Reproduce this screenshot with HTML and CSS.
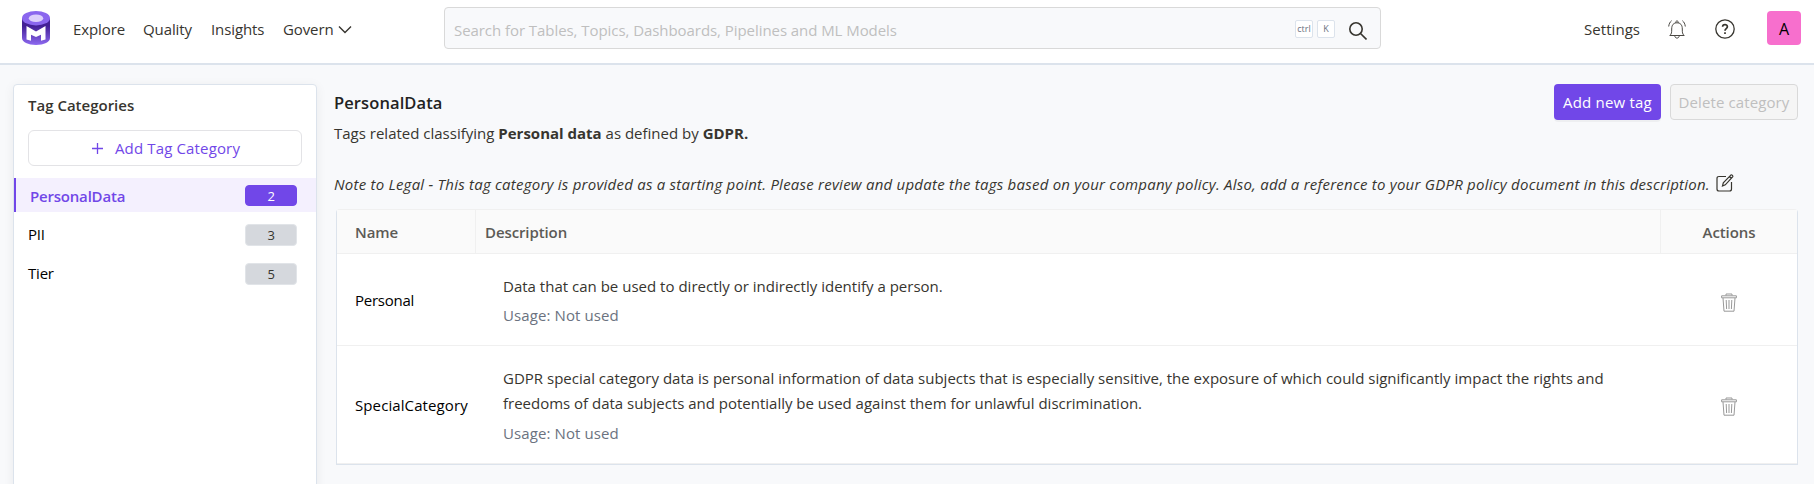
FILE: index.html
```html
<!DOCTYPE html>
<html lang="en">
<head>
<meta charset="utf-8">
<title>Tags</title>
<link rel="stylesheet" href="styles.css">
</head>
<body>
<header class="navbar">
  <svg class="logo" viewBox="0 0 28 34">
    <defs>
      <linearGradient id="body" x1="0" y1="0" x2="0" y2="1">
        <stop offset="0.3" stop-color="#432096"/><stop offset="1" stop-color="#8d69f0"/>
      </linearGradient>
    </defs>
    <path fill="url(#body)" d="M0 7h28v20c0 4-6 7-14 7S0 31 0 27z"/>
    <ellipse cx="14" cy="7.2" rx="14" ry="7.2" fill="#8a66ee"/>
    <ellipse cx="14" cy="7.2" rx="7.2" ry="3.8" fill="#dccffb"/>
    <path fill="#fff" d="M4.500 15 14 20.500l9.500-5.500v13.500l-4.500 1.200v-6L14 26l-5-2.300v6l-4.500-1.200z"/>
  </svg>
  <nav class="links">
    <a class="explore">Explore</a><a class="quality">Quality</a><a class="insights">Insights</a><a class="govern">Govern</a>
    <svg class="chevron" viewBox="0 0 14 9"><path d="M1 1.500l6 6 6-6"/></svg>
  </nav>
  <div class="search">
    <span class="placeholder">Search for Tables, Topics, Dashboards, Pipelines and ML Models</span>
    <kbd>ctrl</kbd><kbd>K</kbd>
    <svg class="glass" viewBox="0 0 18 18"><circle cx="7" cy="7" r="6.200"/><path d="M11.500 11.500l6 6"/></svg>
  </div>
  <div class="tools">
    <a class="settings">Settings</a>
    <svg class="bell" viewBox="0 0 18 20"><path d="M1.800 16.500h14.400c-1.900-1.700-1.900-3-1.900-6.500 0-4.200-2-6.200-5.300-6.200S3.700 5.800 3.700 10c0 3.500 0 4.800-1.900 6.500zM7.700 3.800c0-2.600 2.600-2.600 2.600 0M6.800 16.700c0 3.200 4.400 3.200 4.400 0M3.600 1.700C2 3 1 4.800.7 7.500M14.400 1.700c1.600 1.300 2.600 3.100 2.900 5.800"/></svg>
    <svg class="help" viewBox="0 0 20 20"><circle cx="10" cy="10" r="9.200"/><path class="mark" d="M7.600 7.800c0-3 4.800-3 4.800 0 0 1.900-2.400 1.900-2.400 4M10 13.300v1.700"/></svg>
    <span class="avatar">A</span>
  </div>
</header>
<div class="page">
  <aside class="sidebar">
    <h2 class="side-title">Tag Categories</h2>
    <button class="add-category"><svg class="plus" viewBox="0 0 11 11"><path d="M5.500 0v11M0 5.500h11"/></svg><span>Add Tag Category</span></button>
    <div class="category active"><span class="cat-name">PersonalData</span><span class="count">2</span></div>
    <div class="category"><span>PII</span><span class="count">3</span></div>
    <div class="category"><span>Tier</span><span class="count">5</span></div>
  </aside>
  <main class="content">
    <div class="heading">
      <h1>PersonalData</h1>
      <button class="primary">Add new tag</button>
      <button class="disabled">Delete category</button>
    </div>
    <p class="intro">Tags related classifying <b>Personal data</b> as defined by <b>GDPR.</b></p>
    <div class="note"><em>Note to Legal - This tag category is provided as a starting point. Please review and update the tags based on your company policy. Also, add a reference to your GDPR policy document in this description.</em>
      <svg class="edit" viewBox="0 0 18 18"><path d="M10 2.500H3Q1 2.500 1 4.500V15Q1 17 3 17H13.500Q15.500 17 15.500 15V8M6.500 12l.8-3.200 7.500-7.700q.8-.6 1.600.2t.2 1.600L9.300 10.800zM13.500 2.500l1.800 1.700"/></svg>
    </div>
    <div class="table">
      <div class="row head"><div class="cell">Name</div><div class="cell">Description</div><div class="cell">Actions</div></div>
      <div class="row first">
        <div class="cell name">Personal</div>
        <div class="cell desc"><p class="text">Data that can be used to directly or indirectly identify a person.</p><p class="usage">Usage: Not used</p></div>
        <div class="cell action"><svg class="trash" viewBox="0 0 16 19"><path d="M5 2.500V1h6v1.500M.6 2.800h14.800v2H.6zM2 5l1 13.200h10L14 5M5.200 7l.4 9M8 7v9M10.800 7l-.4 9"/></svg></div>
      </div>
      <div class="row second">
        <div class="cell name">SpecialCategory</div>
        <div class="cell desc"><p class="text">GDPR special category data is personal information of data subjects that is especially sensitive, the exposure of which could significantly impact the rights and<br><span class="tight">freedoms of data subjects and potentially be used against them for unlawful discrimination.</span></p><p class="usage">Usage: Not used</p></div>
        <div class="cell action"><svg class="trash" viewBox="0 0 16 19"><path d="M5 2.500V1h6v1.500M.6 2.800h14.800v2H.6zM2 5l1 13.200h10L14 5M5.200 7l.4 9M8 7v9M10.800 7l-.4 9"/></svg></div>
      </div>
    </div>
  </main>
</div>
</body>
</html>
```
FILE: styles.css
```css
* { box-sizing: border-box; }
body {
  margin: 0; height: 484px; overflow: hidden; background: #f8f9fb; color: #37352f;
  font: 15px/25px "Open Sans", "Noto Sans", sans-serif; letter-spacing: -0.2px;
  display: flex; flex-direction: column; white-space: nowrap;
}
h1, h2, p { margin: 0; }
button { font: inherit; letter-spacing: inherit; padding: 0; display: flex; align-items: center; justify-content: center; }
svg { flex: none; fill: none; stroke: #37352f; stroke-width: 1.3; }
.navbar { height: 65px; flex: none; background: #fff; border-bottom: 2px solid #dce3ec; display: flex; align-items: flex-start; padding: 7px 13px 0 22px; }
.logo { width: 28px; height: 34px; margin-top: 4px; stroke: none; }
.links { display: flex; align-items: center; height: 46px; margin: -1px 0 0 23px; width: 371px; letter-spacing: -0.1px; }
.explore { width: 70px; }
.quality { width: 68px; }
.insights { width: 72px; }
.govern { width: 55px; }
.chevron { width: 14px; height: 9px; stroke-width: 1.4; }
.search { width: 937px; height: 42px; border: 1px solid #d9d9d9; border-radius: 4px; background: #f8f9fb; display: flex; align-items: center; padding: 0 13px 0 9px; }
.placeholder { flex: 1; color: #bfbfbf; padding-top: 4px; letter-spacing: -0.06px; }
kbd { width: 18px; height: 18px; margin: 1px 4px 0 0; border: 1px solid #dce3ec; border-radius: 2px; background: #fff; color: #6b7280; font: 9px/15px "Open Sans", sans-serif; letter-spacing: 0; text-align: center; }
.glass { width: 18px; height: 18px; margin: 5px 0 0 10px; stroke-width: 1.6; }
.tools { display: flex; align-items: center; height: 46px; margin: -1px 0 0 auto; }
.settings { width: 84px; letter-spacing: 0.05px; }
.bell { width: 18px; height: 20px; margin-right: 29px; stroke-width: 1; stroke: #4a4843; }
.help { width: 20px; height: 20px; margin-right: 32px; }
.mark { stroke-width: 1.7; }
.avatar { width: 34px; height: 34px; border-radius: 4px; background: #f76fcd; color: #000; text-align: center; font-size: 16px; line-height: 36px; margin-top: -2px; }
.page { flex: 1; display: flex; padding: 19px 16px 0 13px; gap: 17px; }
.sidebar { width: 304px; flex: none; height: 420px; border: 1px solid #dce3ec; border-radius: 4px; background: #fff; box-shadow: 0 2px 12px rgba(0,0,0,.06); }
.side-title { font-size: 15px; font-weight: 600; letter-spacing: 0; line-height: 25px; margin: 8px 0 12px 14px; }
.add-category { width: 274px; height: 36px; margin: 0 0 12px 14px; padding-left: 2px; background: #fff; border: 1px solid #e3e3e6; border-radius: 6px; color: #7147e8; gap: 12px; letter-spacing: 0.15px; }
.plus { width: 11px; height: 11px; stroke: #7147e8; }
.category { height: 34px; margin-bottom: 5px; padding: 1px 19px 0 14px; display: flex; justify-content: space-between; align-items: center; color: #000; }
.count { width: 52px; height: 22px; border: 1px solid #e1e4e8; border-radius: 4px; background: #d5d8dd; color: #37352f; text-align: center; font-size: 13px; line-height: 20px; }
.active { background: #f4f0fe; border-left: 2px solid #7147e8; color: #7147e8; font-weight: 600; padding-top: 0; }
.cat-name { padding-top: 3px; }
.active .count { height: 21px; background: #7147e8; border-color: #7147e8; color: #fff; font-weight: 400; }
.content { flex: 1; min-width: 0; display: flex; flex-direction: column; }
.heading { display: flex; height: 36px; align-items: center; }
h1 { flex: 1; font-size: 16.500px; font-weight: 600; letter-spacing: 0.1px; color: #222; }
.primary { width: 107px; height: 36px; border: 0; border-radius: 4px; background: #7147e8; color: #fff; letter-spacing: 0.2px; box-shadow: 0 2px 0 rgba(0,0,0,.04); }
.disabled { width: 128px; height: 36px; margin-left: 9px; border: 1px solid #d9d9d9; border-radius: 4px; background: #f5f5f5; color: #bfbfbf; letter-spacing: 0.1px; }
.intro { line-height: 25px; margin-top: 1px; letter-spacing: 0; }
.note { display: flex; align-items: center; height: 25px; margin: 26px 0 12px; }
.note em { width: 1382px; letter-spacing: 0.235px; }
.edit { width: 18px; height: 18px; margin-top: -4px; stroke-width: 1.2; }
.table { width: 1462px; height: 256px; border: 1px solid #dce3ec; border-top-color: #f0f0f0; border-radius: 4px 4px 0 0; background: #fff; align-self: flex-end; }
.row { display: grid; grid-template-columns: 139px 1185px 136px; border-bottom: 1px solid #f0f0f0; }
.cell { display: flex; align-items: center; padding-top: 2px; }
.head { height: 44px; background: #fafafa; color: #5c5a56; font-weight: 600; letter-spacing: -0.1px; }
.head .cell { padding-left: 18px; border-right: 1px solid #f0f0f0; }
.head .cell:nth-child(2) { padding-left: 9px; }
.head .cell:nth-child(3) { padding-left: 0; border: 0; justify-content: center; }
.first { height: 92px; }
.first .name { letter-spacing: -0.25px; }
.second { height: 118px; }
.name { padding-left: 18px; color: #000; letter-spacing: 0.1px; }
.desc { padding-left: 27px; flex-direction: column; align-items: flex-start; justify-content: center; }
.text { letter-spacing: 0.01px; }
.tight { letter-spacing: -0.01px; }
.usage { color: #6b7280; margin-top: 4px; letter-spacing: 0.1px; }
.second .usage { margin-top: 5px; }
.action { justify-content: center; }
.trash { width: 16px; height: 19px; margin-top: 3px; stroke: #999; stroke-width: 1; }
.second .trash { margin-top: 1px; }
```
